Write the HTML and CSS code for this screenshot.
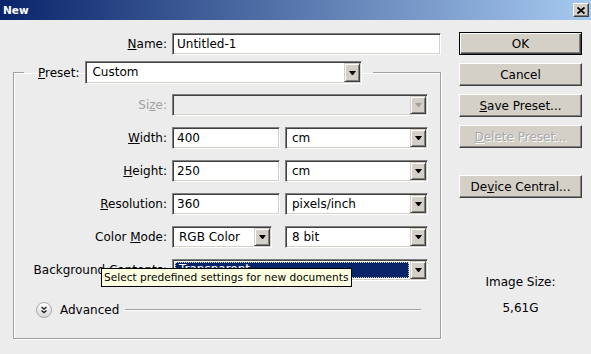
FILE: index.html
```
<!DOCTYPE html>
<html lang="en">
<head>
  <meta charset="UTF-8" />
  <title>New</title>
  <link rel="stylesheet" href="styles.css">
</head>
<body>
  <div class="window">
    <div class="titlebar">
      <span class="title">New</span>
      <span class="close-btn">
        <svg width="8" height="7" viewBox="0 0 8 7"><path d="M0.5 0.5 L7.5 6.5 M7.5 0.5 L0.5 6.5" stroke="#000" stroke-width="1.8" fill="none"/></svg>
      </span>
    </div>

    <div class="dialog">
      <div class="main">
        <div class="name-row">
          <span class="label"><u>N</u>ame:</span>
          <div class="field">Untitled-1</div>
        </div>

        <fieldset class="group">
          <legend>
            <span class="legend-inner">
              <span class="label"><u>P</u>reset:</span>
              <div class="combo preset-combo"><span class="combo-text">Custom</span><span class="combo-arrow"></span></div>
            </span>
          </legend>

          <div class="rows">
            <span class="label disabled">Si<u>z</u>e:</span>
            <div class="combo combo-disabled span-2"><span class="combo-text"></span><span class="combo-arrow"></span></div>

            <span class="label"><u>W</u>idth:</span>
            <div class="field">400</div>
            <div class="combo"><span class="combo-text">cm</span><span class="combo-arrow"></span></div>

            <span class="label"><u>H</u>eight:</span>
            <div class="field">250</div>
            <div class="combo"><span class="combo-text">cm</span><span class="combo-arrow"></span></div>

            <span class="label"><u>R</u>esolution:</span>
            <div class="field">360</div>
            <div class="combo"><span class="combo-text">pixels/inch</span><span class="combo-arrow"></span></div>

            <span class="label">Color <u>M</u>ode:</span>
            <div class="combo mode-combo"><span class="combo-text">RGB Color</span><span class="combo-arrow"></span></div>
            <div class="combo"><span class="combo-text">8 bit</span><span class="combo-arrow"></span></div>

            <span class="label">Background <u>C</u>ontents:</span>
            <div class="combo span-2"><span class="combo-text selected">Transparent</span><span class="combo-arrow"></span></div>
          </div>

          <div class="advanced">
            <svg class="adv-icon" width="16" height="16" viewBox="0 0 16 16">
              <defs>
                <linearGradient id="advGrad" x1="0" y1="0" x2="0" y2="1">
                  <stop offset="0" stop-color="#ffffff"/>
                  <stop offset="1" stop-color="#d6d6d6"/>
                </linearGradient>
              </defs>
              <circle cx="8" cy="8" r="7.5" fill="url(#advGrad)" stroke="#a8a8a8"/>
              <path d="M5.5 5 L8 7 L10.5 5 M5.5 8.5 L8 10.5 L10.5 8.5" stroke="#222" stroke-width="1.4" fill="none"/>
            </svg>
            <span class="adv-text">Advanced</span>
            <span class="adv-line"></span>
          </div>
        </fieldset>
      </div>

      <div class="side">
        <button class="btn btn-default">OK</button>
        <button class="btn">Cancel</button>
        <button class="btn"><u>S</u>ave Preset...</button>
        <button class="btn btn-disabled"><u>D</u>elete Preset...</button>
        <button class="btn btn-device">De<u>v</u>ice Central...</button>

        <div class="image-size">Image Size:</div>
        <div class="image-size-value">5,61G</div>
      </div>
    </div>

    <div class="tooltip">Select predefined settings for new documents</div>
  </div>
</body>
</html>
```

FILE: styles.css
```
body {
  margin: 0;
  background: #ececec;
  font-family: "DejaVu Sans", Tahoma, sans-serif;
  font-size: 12px;
  color: #000;
}

.window {
  position: relative;
  width: 591px;
  height: 354px;
  overflow: hidden;
}

.titlebar {
  height: 20px;
  background: linear-gradient(to right, #0a246a, #a6caf0);
  display: flex;
  align-items: center;
  justify-content: space-between;
  padding: 0 2px 0 3px;
  box-sizing: border-box;
}

.title {
  color: #fff;
  font-weight: bold;
  font-size: 10.5px;
}

.close-btn {
  width: 16px;
  height: 14px;
  box-sizing: border-box;
  background: #d4d0c8;
  border: 1px solid;
  border-color: #fff #404040 #404040 #fff;
  box-shadow: inset -1px -1px 0 #808080;
  display: flex;
  align-items: center;
  justify-content: center;
}

.dialog {
  display: flex;
  align-items: flex-start;
  padding: 13px 0 0 13px;
}

.main {
  width: 428px;
}

.label {
  text-align: right;
  align-self: center;
  white-space: nowrap;
}

.label.disabled {
  color: #a0a0a0;
}

.name-row {
  display: grid;
  grid-template-columns: 154px 269px;
  column-gap: 5px;
  height: 22px;
}

.field {
  height: 22px;
  box-sizing: border-box;
  background: #fff;
  border: 1px solid;
  border-color: #808080 #fff #fff #808080;
  box-shadow: inset 1px 1px 0 #404040, inset -1px -1px 0 #d4d0c8;
  padding: 0 4px;
  line-height: 20px;
}

.combo {
  height: 22px;
  box-sizing: border-box;
  display: flex;
  background: #fff;
  border: 1px solid;
  border-color: #808080 #fff #fff #808080;
  box-shadow: inset 1px 1px 0 #404040, inset -1px -1px 0 #d4d0c8;
  padding: 1px;
}

.combo-text {
  flex: 1;
  padding-left: 5px;
  line-height: 18px;
  white-space: nowrap;
  overflow: hidden;
}

.combo-text.selected {
  background: #0a246a;
  color: #fff;
  margin: 1px 1px 1px 1px;
  padding-left: 4px;
  line-height: 14px;
  outline: 1px dotted #d8d8a0;
  outline-offset: -1px;
}

.combo-arrow {
  width: 16px;
  box-sizing: border-box;
  background: #d4d0c8;
  border: 1px solid;
  border-color: #d4d0c8 #404040 #404040 #d4d0c8;
  box-shadow: inset 1px 1px 0 #fff, inset -1px -1px 0 #808080;
  display: flex;
  align-items: center;
  justify-content: center;
}

.combo-arrow::after {
  content: "";
  width: 1px;
  height: 0;
  border-top: 4px solid #000;
  border-left: 3px solid transparent;
  border-right: 3px solid transparent;
}

.combo-disabled {
  background: #ececec;
}

.combo-disabled .combo-arrow::after {
  border-top-color: #a0a0a0;
}

.group {
  margin: 6px 0 0;
  padding: 0;
  min-width: 0;
  width: 428px;
  box-sizing: border-box;
  border: 1px solid #a0a0a0;
  box-shadow: 1px 1px 0 #fff, inset 1px 1px 0 #fff;
}

.group legend {
  margin-left: 10px;
  padding: 0 11px 0 14px;
}

.legend-inner {
  display: flex;
  align-items: center;
  gap: 6px;
}

.preset-combo {
  width: 277px;
  height: 23px;
}

.rows {
  display: grid;
  grid-template-columns: 153px 108px 143px;
  grid-auto-rows: 22px;
  column-gap: 5px;
  row-gap: 11px;
  margin-top: 10px;
}

.span-2 {
  grid-column: span 2;
}

.mode-combo {
  width: 100px;
}

.advanced {
  display: flex;
  align-items: center;
  height: 16px;
  margin: 21px 19px 20px 22px;
}

.adv-icon {
  flex: none;
}

.adv-text {
  margin: 0 6px 0 8px;
}

.adv-line {
  flex: 1;
  height: 1px;
  background: #a0a0a0;
  border-bottom: 1px solid #fff;
}

.side {
  width: 123px;
  margin: -1px 0 0 18px;
  display: flex;
  flex-direction: column;
  gap: 8px;
}

.btn {
  height: 23px;
  width: 123px;
  padding: 0;
  font: inherit;
  color: #000;
  background: #d4d0c8;
  border: 1px solid;
  border-color: #fff #404040 #404040 #fff;
  box-shadow: inset -1px -1px 0 #808080;
  text-align: center;
}

.btn-default {
  border-color: #000;
  box-shadow: inset 1px 1px 0 #fff, inset -1px -1px 0 #404040, inset -2px -2px 0 #808080;
}

.btn-disabled {
  color: #a8a8a8;
  text-shadow: 1px 1px 0 #fff;
}

.btn-device {
  margin-top: 19px;
}

.image-size {
  margin-top: 69px;
  line-height: 14px;
  text-align: center;
}

.image-size-value {
  margin-top: 4px;
  line-height: 14px;
  text-align: center;
}

.tooltip {
  position: absolute;
  left: 101px;
  top: 268px;
  height: 19px;
  box-sizing: border-box;
  padding: 0 3px 0 2px;
  background: #ffffe1;
  border: 1px solid #000;
  font-size: 10.6px;
  line-height: 17px;
  white-space: nowrap;
}
```
